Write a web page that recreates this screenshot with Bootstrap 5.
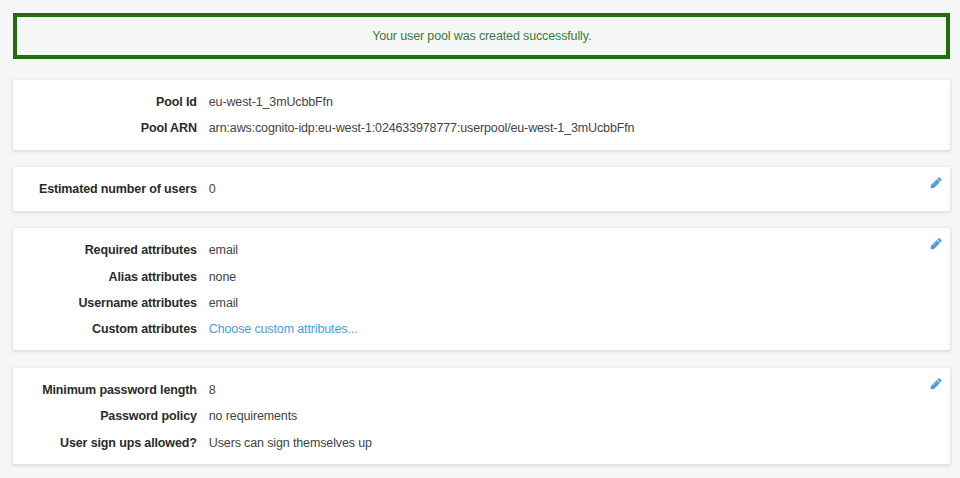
<!DOCTYPE html>
<html lang="en">
<head>
<meta charset="utf-8">
<meta name="viewport" content="width=device-width, initial-scale=1">
<title>User pool</title>
<link href="https://cdn.jsdelivr.net/npm/bootstrap@5.3.0/dist/css/bootstrap.min.css" rel="stylesheet">
<style>
body{background:#f5f7f7;font:12.5px/26.2px "Liberation Sans",Arial,sans-serif;letter-spacing:-.132px;color:#444;overflow:hidden}
.pool-page{padding:13px 9.600px 0 13px}
.notice{height:45.700px;border:4px solid #1f6d0c;color:#3a7a3c;line-height:38px;margin-bottom:21.100px}
.panel{background:#fff;border-radius:1px;box-shadow:0 1px 3px 1px rgba(0,0,0,.1);padding:9.300px 0 8.100px;margin-bottom:17.500px}
.panel dt{width:183.800px;color:#2b2b2b;font-weight:700}
.panel dd{padding-left:12px}
.panel a{color:#4a9bdc}
.edit{top:10px;right:8px;line-height:0}
</style>
</head>
<body>
<svg class="d-none" aria-hidden="true">
<symbol id="pencil" viewBox="0 0 12 12"><path fill="currentColor" d="M.5 11.300l.5-3.300L6.900 2.100l3 3L4 10.900zM7.400 1.600l1-1q.7-.6 1.400 0l1.600 1.600q.6.7 0 1.400l-1 1z"/><path fill="none" stroke="#fff" stroke-opacity=".5" stroke-width=".7" d="M2.700 7.800L7 3.500"/></symbol>
</svg>
<main class="pool-page">
<div class="notice text-center" role="status">Your user pool was created successfully.</div>
<section class="panel position-relative">
<dl class="mb-0">
<div class="d-flex"><dt class="text-end">Pool Id</dt><dd class="mb-0">eu-west-1_3mUcbbFfn</dd></div>
<div class="d-flex"><dt class="text-end">Pool ARN</dt><dd class="mb-0">arn:aws:cognito-idp:eu-west-1:024633978777:userpool/eu-west-1_3mUcbbFfn</dd></div>
</dl>
</section>
<section class="panel position-relative">
<a class="edit position-absolute" href="#" aria-label="Edit users"><svg width="12" height="12"><use href="#pencil"/></svg></a>
<dl class="mb-0">
<div class="d-flex"><dt class="text-end">Estimated number of users</dt><dd class="mb-0">0</dd></div>
</dl>
</section>
<section class="panel position-relative">
<a class="edit position-absolute" href="#" aria-label="Edit attributes"><svg width="12" height="12"><use href="#pencil"/></svg></a>
<dl class="mb-0">
<div class="d-flex"><dt class="text-end">Required attributes</dt><dd class="mb-0">email</dd></div>
<div class="d-flex"><dt class="text-end">Alias attributes</dt><dd class="mb-0">none</dd></div>
<div class="d-flex"><dt class="text-end">Username attributes</dt><dd class="mb-0">email</dd></div>
<div class="d-flex"><dt class="text-end">Custom attributes</dt><dd class="mb-0"><a class="text-decoration-none" href="#">Choose custom attributes...</a></dd></div>
</dl>
</section>
<section class="panel position-relative">
<a class="edit position-absolute" href="#" aria-label="Edit policies"><svg width="12" height="12"><use href="#pencil"/></svg></a>
<dl class="mb-0">
<div class="d-flex"><dt class="text-end">Minimum password length</dt><dd class="mb-0">8</dd></div>
<div class="d-flex"><dt class="text-end">Password policy</dt><dd class="mb-0">no requirements</dd></div>
<div class="d-flex"><dt class="text-end">User sign ups allowed?</dt><dd class="mb-0">Users can sign themselves up</dd></div>
</dl>
</section>
</main>
<script src="https://cdn.jsdelivr.net/npm/bootstrap@5.3.0/dist/js/bootstrap.bundle.min.js"></script>
</body>
</html>
